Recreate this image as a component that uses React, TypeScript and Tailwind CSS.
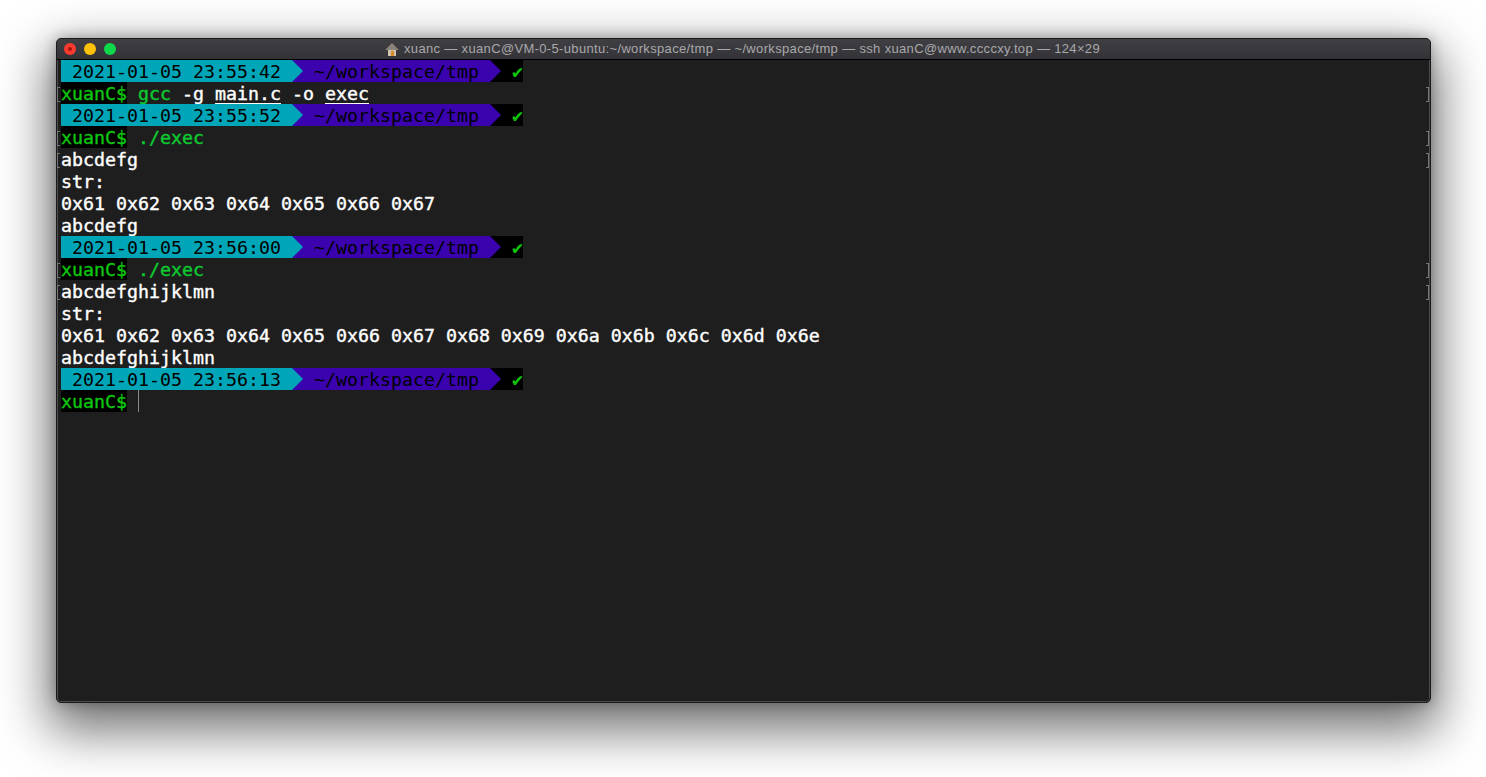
import React from 'react';

const mono = 'font-["DejaVu_Sans_Mono",monospace]';

const Bracket = ({ side }: { side: 'left' | 'right' }) => (
  <span
    className={`mt-[5px] h-[15px] w-[3px] shrink-0 border-y border-[#77777a] ${
      side === 'left' ? 'border-l' : 'border-r'
    }`}
  />
);

const Arrow = ({ color, bg }: { color: string; bg: string }) => (
  <svg width="11" height="22" viewBox="0 0 11 22" className={`shrink-0 ${bg}`}>
    <polygon points="0,0 11,11 0,22" fill={color} />
  </svg>
);

const Status = ({ time }: { time: string }) => (
  <div className="flex h-[22px] pl-[4px] text-black">
    <span className="whitespace-pre bg-[#00a5b7]"> {time} </span>
    <Arrow color="#00a5b7" bg="bg-[#3a03ad]" />
    <span className="whitespace-pre bg-[#3a03ad]"> ~/workspace/tmp </span>
    <Arrow color="#3a03ad" bg="bg-black" />
    <span className="whitespace-pre bg-black font-bold text-[#0fc40f]"> ✔</span>
  </div>
);

const Line = ({ children, brackets }: { children: React.ReactNode; brackets?: boolean }) => (
  <div className="flex h-[22px]">
    <div className="flex w-[4px] shrink-0 justify-start">{brackets && <Bracket side="left" />}</div>
    <div className="flex-1 whitespace-pre text-white [-webkit-text-stroke:0.4px]">{children}</div>
    {brackets && (
      <div className="mr-[1px] flex">
        <Bracket side="right" />
      </div>
    )}
  </div>
);

const Prompt = () => <span className="inline-block h-[22px] bg-black text-[#0fc40f] align-top">xuanC$</span>;
const Cmd = ({ children }: { children: string }) => <span className="text-[#0dcb2f]">{children}</span>;
const File = ({ children }: { children: string }) => <span className="underline underline-offset-[3px]">{children}</span>;

export default function App() {
  return (
    <div className="h-[777px] w-[1486px] overflow-hidden bg-white pl-[56px] pt-[38px]">
      <div className="h-[665px] w-[1375px] overflow-hidden rounded-[5px] border border-[#1a1a1c] bg-[#1e1e1e] shadow-[0_20px_50px_8px_rgba(0,0,0,0.55),0_0_14px_rgba(0,0,0,0.3),inset_0_0_0_1px_rgba(255,255,255,0.2)]">
        {/* title bar */}
        <div className="relative flex h-[21px] items-center border-b border-black bg-gradient-to-b from-[#403f43] to-[#333236] font-['Liberation_Sans',sans-serif]">
          <div className="flex w-[60px] shrink-0 gap-[8px] pl-[7px]">
            <span className="flex h-[12px] w-[12px] items-center justify-center rounded-full bg-[#fb3b30]">
              <span className="h-[4px] w-[4px] rounded-full bg-[#a8140e]" />
            </span>
            <span className="h-[12px] w-[12px] shrink-0 rounded-full bg-[#fdc209]" />
            <span className="h-[12px] w-[12px] shrink-0 rounded-full bg-[#0fd84b]" />
          </div>
          <div className="flex flex-1 items-center justify-center gap-[5px] pr-[62px] text-[13px] tracking-[0.34px] text-[#a9a9ab]">
            <svg width="14" height="13" viewBox="0 0 14 13">
              <rect x="3" y="6" width="8" height="7" fill="#cfc3ad" />
              <polygon points="7,0 14,7 0,7" fill="#8a8378" />
              <rect x="6" y="8" width="3" height="5" fill="#d98a2b" />
            </svg>
            <span>xuanc — xuanC@VM-0-5-ubuntu:~/workspace/tmp — ~/workspace/tmp — ssh xuanC@www.ccccxy.top — 124×29</span>
          </div>
        </div>

        {/* terminal */}
        <div className={`${mono} text-[18.27px] leading-[24px]`}>
          <Status time="2021-01-05 23:55:42" />
          <Line brackets>
            <Prompt /> <Cmd>gcc</Cmd> -g <File>main.c</File> -o <File>exec</File>
          </Line>
          <Status time="2021-01-05 23:55:52" />
          <Line brackets>
            <Prompt /> <Cmd>./exec</Cmd>
          </Line>
          <Line brackets>abcdefg</Line>
          <Line>str:</Line>
          <Line>0x61 0x62 0x63 0x64 0x65 0x66 0x67</Line>
          <Line>abcdefg</Line>
          <Status time="2021-01-05 23:56:00" />
          <Line brackets>
            <Prompt /> <Cmd>./exec</Cmd>
          </Line>
          <Line brackets>abcdefghijklmn</Line>
          <Line>str:</Line>
          <Line>0x61 0x62 0x63 0x64 0x65 0x66 0x67 0x68 0x69 0x6a 0x6b 0x6c 0x6d 0x6e</Line>
          <Line>abcdefghijklmn</Line>
          <Status time="2021-01-05 23:56:13" />
          <Line>
            <span className="inline-flex h-[22px] align-top">
              <Prompt />
              <span className="w-[11px]" />
              <span className="w-px bg-[#8a8a8a]" />
            </span>
          </Line>
        </div>
      </div>
    </div>
  );
}
